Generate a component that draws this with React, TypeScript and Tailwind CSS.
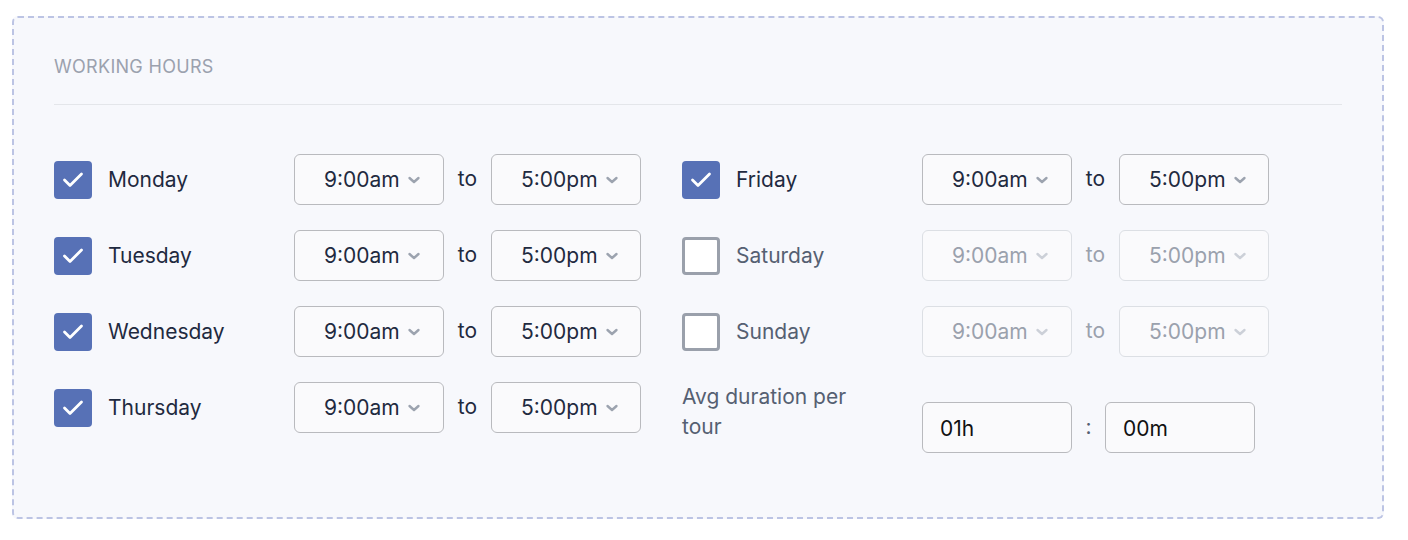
import React from 'react';

type Day = { name: string; enabled: boolean };

const leftDays: Day[] = [
  { name: 'Monday', enabled: true },
  { name: 'Tuesday', enabled: true },
  { name: 'Wednesday', enabled: true },
  { name: 'Thursday', enabled: true },
];

const rightDays: Day[] = [
  { name: 'Friday', enabled: true },
  { name: 'Saturday', enabled: false },
  { name: 'Sunday', enabled: false },
];

function Chevron({ disabled }: { disabled?: boolean }) {
  return (
    <svg
      width="14"
      height="14"
      viewBox="0 0 14 14"
      fill="none"
      className={disabled ? 'text-[#ccd0d8]' : 'text-[#9ca3af]'}
    >
      <path d="M2.5 5l4.5 4 4.5-4" stroke="currentColor" strokeWidth="2.4" strokeLinecap="round" strokeLinejoin="round" />
    </svg>
  );
}

function TimeSelect({ value, disabled }: { value: string; disabled?: boolean }) {
  return (
    <div
      className={`flex h-[51px] w-[150px] items-center rounded-[6px] border pl-[29px] ${
        disabled ? 'border-[#dcdfe4] text-[#9aa1ad]' : 'border-[#b9babe] text-[#1f2a40]'
      } bg-[#fafafc]`}
    >
      <span className="text-[21px] leading-none">{value}</span>
      <span className="ml-[7px] flex">
        <Chevron disabled={disabled} />
      </span>
    </div>
  );
}

function Checkbox({ checked }: { checked: boolean }) {
  if (checked) {
    return (
      <div className="flex h-[38px] w-[38px] shrink-0 items-center justify-center rounded-[4px] bg-[#5771b6]">
        <svg width="22" height="17" viewBox="0 0 22 17" fill="none">
          <path d="M2.5 9l5.5 5.5L19.5 3" stroke="white" strokeWidth="2.8" strokeLinecap="round" strokeLinejoin="round" />
        </svg>
      </div>
    );
  }
  return <div className="h-[38px] w-[38px] shrink-0 rounded-[4px] border-[3px] border-[#9aa0ab] bg-white" />;
}

function DayRow({ day }: { day: Day }) {
  return (
    <div className="flex h-[51px] items-center">
      <div className="flex w-[240px] items-center">
        <Checkbox checked={day.enabled} />
        <span
          className={`ml-[16px] text-[21px] leading-none ${day.enabled ? 'text-[#1f2a40]' : 'text-[#556072]'}`}
        >
          {day.name}
        </span>
      </div>
      <TimeSelect value="9:00am" disabled={!day.enabled} />
      <span
        className={`w-[47px] text-center text-[21px] leading-none ${
          day.enabled ? 'text-[#1f2a40]' : 'text-[#9aa1ad]'
        } -mt-[2px]`}
      >
        to
      </span>
      <TimeSelect value="5:00pm" disabled={!day.enabled} />
    </div>
  );
}

function DurationInput({ value }: { value: string }) {
  return (
    <div className="flex h-[51px] w-[150px] items-center rounded-[6px] border border-[#b9babe] bg-[#fafafc] pl-[17px]">
      <span className="mt-[2px] text-[21px] leading-none text-[#111111]">{value}</span>
    </div>
  );
}

export default function App() {
  return (
    <div className="min-h-screen bg-white pl-[12px] pt-[16px]" style={{ fontFamily: 'Inter, "Noto Sans", sans-serif' }}>
      <div className="w-[1372px] rounded-[6px] border-2 border-dashed border-[#bcc4e4] bg-[#f7f8fc] px-[40px] pb-[64px] pt-[37px]">
        <div className="text-[18px] leading-[24px] tracking-[0.3px] text-[#9ba1ae]">WORKING HOURS</div>
        <div className="mt-[25px] h-px bg-[#e4e6ea]" />

        <div className="mt-[49px] flex">
          <div className="flex w-[628px] flex-col gap-[25px]">
            {leftDays.map(d => (
              <DayRow key={d.name} day={d} />
            ))}
          </div>
          <div className="flex flex-col gap-[25px]">
            {rightDays.map(d => (
              <DayRow key={d.name} day={d} />
            ))}
            <div className="flex items-start">
              <div className="w-[240px] pr-[60px] text-[21px] leading-[30px] text-[#556072]">
                Avg duration per tour
              </div>
              <div className="mt-[20px] flex items-center">
                <DurationInput value="01h" />
                <span className="w-[33px] text-center text-[21px] leading-none text-[#556072] -mt-[3px]">:</span>
                <DurationInput value="00m" />
              </div>
            </div>
          </div>
        </div>
      </div>
    </div>
  );
}
